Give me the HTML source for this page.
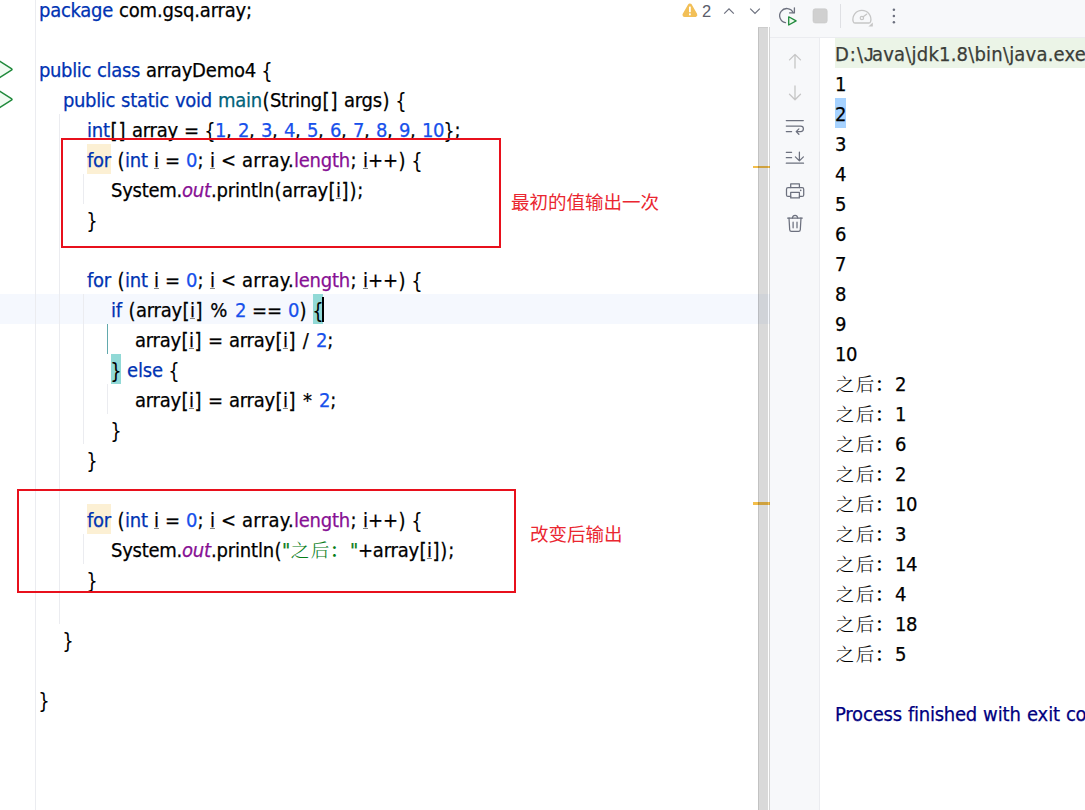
<!DOCTYPE html>
<html lang="zh-CN">
<head>
<meta charset="utf-8">
<title>arrayDemo4</title>
<style>
html,body{margin:0;padding:0;}
body{width:1085px;height:810px;overflow:hidden;position:relative;background:#fff;
 font-family:"DejaVu Sans Condensed","DejaVu Sans","Liberation Sans","Noto Sans CJK SC",sans-serif;font-stretch:condensed;font-size:20px;color:#000;}
#editor{position:absolute;left:0;top:0;width:770px;height:810px;background:#fff;overflow:hidden;}
#curline{position:absolute;left:0;top:294px;width:770px;height:30px;background:#f5f8fe;}
.gline{position:absolute;width:1px;background:#ebecf0;}
.ln{position:absolute;white-space:pre;height:30px;line-height:30px;color:#000;-webkit-text-stroke:0.25px;}
.k{color:#0033b3}.n{color:#1750eb}.f{color:#871094}.m{color:#00627a}.s{color:#067d17}
.i{color:#871094;font-style:italic}
.u{text-decoration:underline;text-decoration-color:#808080;text-decoration-thickness:1px;text-underline-offset:1px}
.z{color:#067d17;font-family:"Liberation Serif","Noto Serif CJK SC",serif;font-weight:300;-webkit-text-stroke:0;position:relative;top:0px}
.w{letter-spacing:0.28px}
.hl{position:absolute;background:#fcf0d4;height:30px;}
.br{position:absolute;background:#91d9d6;height:30px;width:10px}
.caret{position:absolute;width:2px;height:25px;background:#000;}
.box{position:absolute;border:2px solid #e8101c;box-sizing:border-box;}
.note{position:absolute;color:#ea2630;font-family:"Liberation Sans","Noto Sans CJK SC",sans-serif;font-size:18.5px;white-space:pre;line-height:24px;}
#sb{position:absolute;left:758px;top:27px;width:10px;height:783px;background:rgba(0,0,0,0.15);border-left:1px solid rgba(0,0,0,0.1);border-top:1px solid rgba(0,0,0,0.05);box-sizing:border-box;}
#sb2{position:absolute;left:769px;top:27px;width:1px;height:783px;background:rgba(0,0,0,0.17);}
.mark{position:absolute;left:753px;width:17px;height:2px;background:#f3be4b;}
#panel{position:absolute;left:770px;top:0;width:315px;height:810px;background:#f7f8fa;}
#tbline{position:absolute;left:0;top:37px;width:315px;height:1px;background:#ebecf0;}
#console{position:absolute;left:49px;top:38px;width:266px;height:772px;background:#fff;border-left:1px solid #ebecf0;box-sizing:border-box;overflow:hidden;}
.cl{position:absolute;left:15px;-webkit-text-stroke:0.25px;white-space:pre;height:30px;line-height:30px;color:#000;}
.cmd{color:#3a3d38}
.b{display:inline-block;transform:scaleY(1.09);transform-origin:50% 16.2px}
.b2{-webkit-text-stroke:0}
.J{font-family:"Liberation Sans",sans-serif;font-size:19px}
.cmdbg{position:absolute;left:15px;top:0;width:260px;height:30px;background:#ebf4e7}
.selbg{position:absolute;left:15px;top:60px;width:11px;height:30px;background:#a6d2ff}
.zc{font-family:"Liberation Serif","Noto Serif CJK SC",serif;font-weight:300;-webkit-text-stroke:0;color:#000;position:relative;top:0px}
.fin{color:#00007f}
.z,.zc{font-size:18.5px}
.zb{font-weight:600}
svg{position:absolute;overflow:visible}
</style>
</head>
<body>
<div id="editor">
<div id="curline"></div>
<div class="gline" style="left:35px;top:0;height:810px"></div>
<div class="gline" style="left:59px;top:114px;height:510px"></div>
<div class="gline" style="left:83px;top:174px;height:30px"></div>
<div class="gline" style="left:83px;top:294px;height:150px"></div>
<div class="gline" style="left:83px;top:534px;height:30px"></div>
<div class="gline" style="left:107px;top:324px;height:30px;background:#62a9ad"></div>
<div class="gline" style="left:107px;top:384px;height:30px"></div>
<div class="hl" style="left:87px;top:144px;width:24px"></div>
<div class="hl" style="left:87px;top:504px;width:24px"></div>
<div class="br" style="left:313px;top:294px"></div>
<div class="br" style="left:111px;top:354px"></div>
<div class="ln" id="L1" style="top:-5px;left:39px"><span class="k"><span style="letter-spacing:-0.277px">package</span></span><span class="p"><span class="w"> </span><span style="letter-spacing:-0.163px">com.gsq.array;</span></span></div>
<div class="ln" id="L3" style="top:55px;left:39px"><span class="k"><span style="letter-spacing:-0.359px">public</span><span class="w"> </span><span style="letter-spacing:-0.334px">class</span></span><span class="p"><span class="w"> </span><span style="letter-spacing:-0.205px">arrayDemo4</span><span class="w"> </span><span class="b b2" style="margin-left:-0.727px;margin-right:-0.727px">{</span></span></div>
<div class="ln" id="L4" style="top:85px;left:63px"><span class="k"><span style="letter-spacing:-0.359px">public</span><span class="w"> </span><span style="letter-spacing:-0.234px">static</span><span class="w"> </span><span style="letter-spacing:-0.270px">void</span></span><span class="p"><span class="w"> </span></span><span class="m"><span style="letter-spacing:-0.242px">main</span></span><span class="p"><span class="b" style="margin-left:0.484px;margin-right:0.484px">(</span><span style="letter-spacing:-0.284px">String</span><span class="b" style="margin-left:0.484px;margin-right:0.484px">[</span><span class="b" style="margin-left:0.484px;margin-right:0.484px">]</span><span class="w"> </span><span style="letter-spacing:-0.219px">args</span><span class="b" style="margin-left:0.484px;margin-right:0.484px">)</span><span class="w"> </span><span class="b b2" style="margin-left:-0.727px;margin-right:-0.727px">{</span></span></div>
<div class="ln" id="L5" style="top:115px;left:87px"><span class="k"><span style="letter-spacing:-0.156px">int</span></span><span class="p"><span class="b" style="margin-left:0.484px;margin-right:0.484px">[</span><span class="b" style="margin-left:0.484px;margin-right:0.484px">]</span><span class="w"> </span><span style="letter-spacing:-0.228px">array</span><span class="w"> </span><span style="letter-spacing:-0.078px">=</span><span class="w"> </span><span class="b b2" style="margin-left:-0.727px;margin-right:-0.727px">{</span></span><span class="n"><span style="letter-spacing:-0.453px">1</span></span><span class="p"><span style="letter-spacing:0.281px">,</span><span class="w"> </span></span><span class="n"><span style="letter-spacing:-0.453px">2</span></span><span class="p"><span style="letter-spacing:0.281px">,</span><span class="w"> </span></span><span class="n"><span style="letter-spacing:-0.453px">3</span></span><span class="p"><span style="letter-spacing:0.281px">,</span><span class="w"> </span></span><span class="n"><span style="letter-spacing:-0.453px">4</span></span><span class="p"><span style="letter-spacing:0.281px">,</span><span class="w"> </span></span><span class="n"><span style="letter-spacing:-0.453px">5</span></span><span class="p"><span style="letter-spacing:0.281px">,</span><span class="w"> </span></span><span class="n"><span style="letter-spacing:-0.453px">6</span></span><span class="p"><span style="letter-spacing:0.281px">,</span><span class="w"> </span></span><span class="n"><span style="letter-spacing:-0.453px">7</span></span><span class="p"><span style="letter-spacing:0.281px">,</span><span class="w"> </span></span><span class="n"><span style="letter-spacing:-0.453px">8</span></span><span class="p"><span style="letter-spacing:0.281px">,</span><span class="w"> </span></span><span class="n"><span style="letter-spacing:-0.453px">9</span></span><span class="p"><span style="letter-spacing:0.281px">,</span><span class="w"> </span></span><span class="n"><span style="letter-spacing:-0.445px">10</span></span><span class="p"><span class="b b2" style="margin-left:-0.727px;margin-right:-0.727px">}</span><span style="margin-left:0.461px;letter-spacing:0.461px">;</span></span></div>
<div class="ln" id="L6" style="top:145px;left:87px"><span class="k"><span style="letter-spacing:-0.245px">for</span></span><span class="p"><span class="w"> </span><span class="b" style="margin-left:0.484px;margin-right:0.484px">(</span></span><span class="k"><span style="letter-spacing:-0.156px">int</span></span><span class="p"><span class="w"> </span></span><span class="u"><span style="letter-spacing:0.000px">i</span></span><span class="p"><span class="w"> </span><span style="letter-spacing:-0.078px">=</span><span class="w"> </span></span><span class="n"><span style="letter-spacing:-0.453px">0</span></span><span class="p"><span style="margin-left:0.461px;letter-spacing:0.461px">;</span><span class="w"> </span></span><span class="u"><span style="letter-spacing:0.000px">i</span></span><span class="p"><span class="w"> </span><span style="letter-spacing:-0.078px">&lt;</span><span class="w"> </span><span style="letter-spacing:0.333px">array.</span></span><span class="f"><span style="letter-spacing:-0.229px">length</span></span><span class="p"><span style="margin-left:0.461px;letter-spacing:0.461px">;</span><span class="w"> </span></span><span class="u"><span style="letter-spacing:0.000px">i</span></span><span class="p"><span style="letter-spacing:-0.078px">++</span><span class="b" style="margin-left:0.484px;margin-right:0.484px">)</span><span class="w"> </span><span class="b b2" style="margin-left:-0.727px;margin-right:-0.727px">{</span></span></div>
<div class="ln" id="L7" style="top:175px;left:111px"><span class="p"><span style="letter-spacing:-0.259px">System.</span></span><span class="i"><span style="letter-spacing:-0.156px">out</span></span><span class="p"><span style="letter-spacing:-0.176px">.println</span><span class="b" style="margin-left:0.484px;margin-right:0.484px">(</span><span style="letter-spacing:-0.228px">array</span><span class="b" style="margin-left:0.484px;margin-right:0.484px">[</span></span><span class="u"><span style="letter-spacing:0.000px">i</span></span><span class="p"><span class="b" style="margin-left:0.484px;margin-right:0.484px">]</span><span class="b" style="margin-left:0.484px;margin-right:0.484px">)</span><span style="margin-left:0.461px;letter-spacing:0.461px">;</span></span></div>
<div class="ln" id="L8" style="top:205px;left:87px"><span class="p"><span class="b b2" style="margin-left:-0.727px;margin-right:-0.727px">}</span></span></div>
<div class="ln" id="L10" style="top:265px;left:87px"><span class="k"><span style="letter-spacing:-0.245px">for</span></span><span class="p"><span class="w"> </span><span class="b" style="margin-left:0.484px;margin-right:0.484px">(</span></span><span class="k"><span style="letter-spacing:-0.156px">int</span></span><span class="p"><span class="w"> </span></span><span class="u"><span style="letter-spacing:0.000px">i</span></span><span class="p"><span class="w"> </span><span style="letter-spacing:-0.078px">=</span><span class="w"> </span></span><span class="n"><span style="letter-spacing:-0.453px">0</span></span><span class="p"><span style="margin-left:0.461px;letter-spacing:0.461px">;</span><span class="w"> </span></span><span class="u"><span style="letter-spacing:0.000px">i</span></span><span class="p"><span class="w"> </span><span style="letter-spacing:-0.078px">&lt;</span><span class="w"> </span><span style="letter-spacing:0.333px">array.</span></span><span class="f"><span style="letter-spacing:-0.229px">length</span></span><span class="p"><span style="margin-left:0.461px;letter-spacing:0.461px">;</span><span class="w"> </span></span><span class="u"><span style="letter-spacing:0.000px">i</span></span><span class="p"><span style="letter-spacing:-0.078px">++</span><span class="b" style="margin-left:0.484px;margin-right:0.484px">)</span><span class="w"> </span><span class="b b2" style="margin-left:-0.727px;margin-right:-0.727px">{</span></span></div>
<div class="ln" id="L11" style="top:295px;left:111px"><span class="k"><span style="letter-spacing:-0.164px">if</span></span><span class="p"><span class="w"> </span><span class="b" style="margin-left:0.484px;margin-right:0.484px">(</span><span style="letter-spacing:-0.228px">array</span><span class="b" style="margin-left:0.484px;margin-right:0.484px">[</span></span><span class="u"><span style="letter-spacing:0.000px">i</span></span><span class="p"><span class="b" style="margin-left:0.484px;margin-right:0.484px">]</span><span class="w"> </span><span style="margin-left:1.445px;letter-spacing:1.445px">%</span><span class="w"> </span></span><span class="n"><span style="letter-spacing:-0.453px">2</span></span><span class="p"><span class="w"> </span><span style="letter-spacing:-0.078px">==</span><span class="w"> </span></span><span class="n"><span style="letter-spacing:-0.453px">0</span></span><span class="p"><span class="b" style="margin-left:0.484px;margin-right:0.484px">)</span><span class="w"> </span></span><span class="p"><span class="b b2" style="margin-left:-0.727px;margin-right:-0.727px">{</span></span></div>
<div class="ln" id="L12" style="top:325px;left:135px"><span class="p"><span style="letter-spacing:-0.228px">array</span><span class="b" style="margin-left:0.484px;margin-right:0.484px">[</span></span><span class="u"><span style="letter-spacing:0.000px">i</span></span><span class="p"><span class="b" style="margin-left:0.484px;margin-right:0.484px">]</span><span class="w"> </span><span style="letter-spacing:-0.078px">=</span><span class="w"> </span><span style="letter-spacing:-0.228px">array</span><span class="b" style="margin-left:0.484px;margin-right:0.484px">[</span></span><span class="u"><span style="letter-spacing:0.000px">i</span></span><span class="p"><span class="b" style="margin-left:0.484px;margin-right:0.484px">]</span><span class="w"> </span><span style="margin-left:0.961px;letter-spacing:0.961px">/</span><span class="w"> </span></span><span class="n"><span style="letter-spacing:-0.453px">2</span></span><span class="p"><span style="margin-left:0.461px;letter-spacing:0.461px">;</span></span></div>
<div class="ln" id="L13" style="top:355px;left:111px"><span class="p"><span class="b b2" style="margin-left:-0.727px;margin-right:-0.727px">}</span></span><span class="p"><span class="w"> </span></span><span class="k"><span style="letter-spacing:-0.133px">else</span></span><span class="p"><span class="w"> </span><span class="b b2" style="margin-left:-0.727px;margin-right:-0.727px">{</span></span></div>
<div class="ln" id="L14" style="top:385px;left:135px"><span class="p"><span style="letter-spacing:-0.228px">array</span><span class="b" style="margin-left:0.484px;margin-right:0.484px">[</span></span><span class="u"><span style="letter-spacing:0.000px">i</span></span><span class="p"><span class="b" style="margin-left:0.484px;margin-right:0.484px">]</span><span class="w"> </span><span style="letter-spacing:-0.078px">=</span><span class="w"> </span><span style="letter-spacing:-0.228px">array</span><span class="b" style="margin-left:0.484px;margin-right:0.484px">[</span></span><span class="u"><span style="letter-spacing:0.000px">i</span></span><span class="p"><span class="b" style="margin-left:0.484px;margin-right:0.484px">]</span><span class="w"> </span><span style="margin-left:1.000px;letter-spacing:1.000px">*</span><span class="w"> </span></span><span class="n"><span style="letter-spacing:-0.453px">2</span></span><span class="p"><span style="margin-left:0.461px;letter-spacing:0.461px">;</span></span></div>
<div class="ln" id="L15" style="top:415px;left:111px"><span class="p"><span class="b b2" style="margin-left:-0.727px;margin-right:-0.727px">}</span></span></div>
<div class="ln" id="L16" style="top:445px;left:87px"><span class="p"><span class="b b2" style="margin-left:-0.727px;margin-right:-0.727px">}</span></span></div>
<div class="ln" id="L18" style="top:505px;left:87px"><span class="k"><span style="letter-spacing:-0.245px">for</span></span><span class="p"><span class="w"> </span><span class="b" style="margin-left:0.484px;margin-right:0.484px">(</span></span><span class="k"><span style="letter-spacing:-0.156px">int</span></span><span class="p"><span class="w"> </span></span><span class="u"><span style="letter-spacing:0.000px">i</span></span><span class="p"><span class="w"> </span><span style="letter-spacing:-0.078px">=</span><span class="w"> </span></span><span class="n"><span style="letter-spacing:-0.453px">0</span></span><span class="p"><span style="margin-left:0.461px;letter-spacing:0.461px">;</span><span class="w"> </span></span><span class="u"><span style="letter-spacing:0.000px">i</span></span><span class="p"><span class="w"> </span><span style="letter-spacing:-0.078px">&lt;</span><span class="w"> </span><span style="letter-spacing:0.333px">array.</span></span><span class="f"><span style="letter-spacing:-0.229px">length</span></span><span class="p"><span style="margin-left:0.461px;letter-spacing:0.461px">;</span><span class="w"> </span></span><span class="u"><span style="letter-spacing:0.000px">i</span></span><span class="p"><span style="letter-spacing:-0.078px">++</span><span class="b" style="margin-left:0.484px;margin-right:0.484px">)</span><span class="w"> </span><span class="b b2" style="margin-left:-0.727px;margin-right:-0.727px">{</span></span></div>
<div class="ln" id="L19" style="top:535px;left:111px"><span class="p"><span style="letter-spacing:-0.259px">System.</span></span><span class="i"><span style="letter-spacing:-0.156px">out</span></span><span class="p"><span style="letter-spacing:-0.176px">.println</span><span class="b" style="margin-left:0.484px;margin-right:0.484px">(</span></span><span class="s"><span style="letter-spacing:-0.281px">&quot;</span></span><span class="z"><span class="zr" style="margin-left:0.746px;margin-right:-0.746px;letter-spacing:1.492px">之后</span><span class="zb" style="margin-left:-0.258px;margin-right:0.258px;letter-spacing:1.484px">：</span></span><span class="s"><span style="letter-spacing:-0.281px">&quot;</span></span><span class="p"><span style="letter-spacing:-0.203px">+array</span><span class="b" style="margin-left:0.484px;margin-right:0.484px">[</span></span><span class="u"><span style="letter-spacing:0.000px">i</span></span><span class="p"><span class="b" style="margin-left:0.484px;margin-right:0.484px">]</span><span class="b" style="margin-left:0.484px;margin-right:0.484px">)</span><span style="margin-left:0.461px;letter-spacing:0.461px">;</span></span></div>
<div class="ln" id="L20" style="top:565px;left:87px"><span class="p"><span class="b b2" style="margin-left:-0.727px;margin-right:-0.727px">}</span></span></div>
<div class="ln" id="L22" style="top:625px;left:63px"><span class="p"><span class="b b2" style="margin-left:-0.727px;margin-right:-0.727px">}</span></span></div>
<div class="ln" id="L24" style="top:685px;left:39px"><span class="p"><span class="b b2" style="margin-left:-0.727px;margin-right:-0.727px">}</span></span></div>
<div class="caret" style="left:322px;top:297px"></div>

<svg id="gut" width="36" height="120" style="left:0;top:0" viewBox="0 0 36 120">
<path d="M-3 59.6 L11.4 68.6 Q12.7 69.4 11.4 70.2 L-3 79.2 Z" fill="#f1fbf2" stroke="#208a3c" stroke-width="1.5" stroke-linejoin="round"/>
<path d="M-3 89.6 L11.4 98.6 Q12.7 99.4 11.4 100.2 L-3 109.2 Z" fill="#f1fbf2" stroke="#208a3c" stroke-width="1.5" stroke-linejoin="round"/>
</svg>
<svg id="insp" width="90" height="24" style="left:675px;top:0" viewBox="675 0 90 24">
<path d="M689.9 5.6 L695.2 14.9 L684.6 14.9 Z" fill="#f2bf57" stroke="#f2bf57" stroke-width="4.2" stroke-linejoin="round"/>
<rect x="689" y="6.6" width="1.8" height="5.6" fill="#fff"/><rect x="689" y="13.4" width="1.8" height="1.9" fill="#fff"/>
<text x="702" y="17.2" font-family="Liberation Sans, sans-serif" font-size="16.5" fill="#5a5d6b">2</text>
<path d="M724.2 13.6 L729 8.8 L733.8 13.6" fill="none" stroke="#6c707e" stroke-width="1.2"/>
<path d="M750.2 8.6 L755 13.4 L759.8 8.6" fill="none" stroke="#6c707e" stroke-width="1.2"/>
</svg>
<div class="box" style="left:61px;top:138px;width:440px;height:110px"></div>
<div class="box" style="left:17px;top:489px;width:499px;height:104px"></div>
<div class="note" style="left:511px;top:191px">最初的值输出一次</div>
<div class="note" style="left:530px;top:523px">改变后输出</div>
</div>
<div class="mark" style="top:166px"></div>
<div class="mark" style="top:502px;height:2.5px"></div>
<div id="sb"></div><div id="sb2"></div>
<div id="panel">

<svg id="tb" width="140" height="37" style="left:0;top:0" viewBox="770 0 140 37">
<path d="M785.5 22.6 A7.1 7.1 0 1 1 793.2 12.6" fill="none" stroke="#6c707e" stroke-width="1.3" stroke-linecap="round"/>
<path d="M794.4 7.8 L794.4 12.9 L789.6 12.9" fill="none" stroke="#6c707e" stroke-width="1.3" stroke-linecap="round" stroke-linejoin="round"/>
<path d="M788.7 16.8 L796.1 20.9 L788.7 25 Z" fill="#eef9ef" stroke="#208a3c" stroke-width="1.3" stroke-linejoin="round"/>
<rect x="813" y="8.8" width="14.2" height="14.2" rx="2.2" fill="#d0d0d0" stroke="#c8c8c8" stroke-width="0.6"/>
<rect x="840" y="4" width="1" height="24" fill="#dfe0e4"/>
<path d="M853.2 21.6 A9 9 0 1 1 870.6 21.6 Q870.2 23 868.8 23 L855 23 Q853.6 23 853.2 21.6 Z" fill="none" stroke="#c6c6c6" stroke-width="1.3"/>
<circle cx="861.9" cy="18" r="1.7" fill="none" stroke="#c6c6c6" stroke-width="1.2"/>
<path d="M863.2 16.8 L866.6 14.2" stroke="#c6c6c6" stroke-width="1.3" stroke-linecap="round"/>
<path d="M872.8 22.4 L872.8 26.6 L868.4 26.6 Z" fill="#c6c6c6"/>
<circle cx="893.9" cy="9.7" r="1.25" fill="#6c707e"/><circle cx="893.9" cy="16" r="1.25" fill="#6c707e"/><circle cx="893.9" cy="22.3" r="1.25" fill="#6c707e"/>
</svg>
<svg id="lt" width="50" height="200" style="left:0;top:40px" viewBox="770 40 50 200" fill="none" stroke-linecap="round" stroke-linejoin="round">
<g stroke="#c6c6c6" stroke-width="1.3">
<path d="M795 68 L795 54.4 M789.5 59.9 L795 54.4 L800.5 59.9"/>
<path d="M795 86 L795 99.7 M789.5 94.2 L795 99.7 L800.5 94.2"/>
</g>
<g stroke="#6c707e" stroke-width="1.25">
<path d="M786.3 120.5 L803.3 120.5"/>
<path d="M786.3 126 L800.6 126 A2.8 2.8 0 0 1 800.6 131.6 L796.4 131.6 M798.9 128.9 L796.2 131.6 L798.9 134.3"/>
<path d="M786.3 131.6 L791.6 131.6"/>
<path d="M786.3 152.3 L791.6 152.3 M786.3 157.7 L791.6 157.7 M786.3 163.2 L803.5 163.2"/>
<path d="M799.4 152 L799.4 160.8 M795.4 156.9 L799.4 160.9 L803.4 156.9"/>
<path d="M790.7 187.5 L790.7 183.9 L799.4 183.9 L799.4 187.5"/>
<path d="M790.7 196.4 L788 196.4 Q786.5 196.4 786.5 194.9 L786.5 189.2 Q786.5 187.6 788 187.6 L802.2 187.6 Q803.7 187.6 803.7 189.2 L803.7 194.9 Q803.7 196.4 802.2 196.4 L799.4 196.4"/>
<rect x="790.7" y="192.4" width="8.7" height="5.5"/>
<path d="M787.6 218 L802.3 218"/>
<path d="M792.4 218 A2.7 3.2 0 0 1 797.7 218"/>
<path d="M789 218 L789.7 229.8 Q789.8 231.4 791.4 231.4 L798.6 231.4 Q800.2 231.4 800.3 229.8 L801 218"/>
<path d="M793.1 222.2 L793.1 227.8 M797 222.2 L797 227.8"/>
</g>
<circle cx="800.7" cy="190.4" r="0.8" fill="#6c707e"/>
</svg>
<div id="tbline"></div>
<div id="console">
<div class="cmdbg"></div><div class="selbg"></div>
<div class="cl" style="top:1px"><span class="cmd"><span class="p"><span style="letter-spacing:1.000px">D:\</span><span class="J" style="letter-spacing:-1.500px">J</span><span style="letter-spacing:0.200px">ava\jdk1.8\bin\java.exe</span><span class="w"> </span><span style="letter-spacing:0.286px">...</span></span></span></div>
<div class="cl" style="top:31px"><span class="p"><span style="letter-spacing:-0.453px">1</span></span></div>
<div class="cl" style="top:61px"><span class="sel"><span class="p"><span style="letter-spacing:-0.453px">2</span></span></span></div>
<div class="cl" style="top:91px"><span class="p"><span style="letter-spacing:-0.453px">3</span></span></div>
<div class="cl" style="top:121px"><span class="p"><span style="letter-spacing:-0.453px">4</span></span></div>
<div class="cl" style="top:151px"><span class="p"><span style="letter-spacing:-0.453px">5</span></span></div>
<div class="cl" style="top:181px"><span class="p"><span style="letter-spacing:-0.453px">6</span></span></div>
<div class="cl" style="top:211px"><span class="p"><span style="letter-spacing:-0.453px">7</span></span></div>
<div class="cl" style="top:241px"><span class="p"><span style="letter-spacing:-0.453px">8</span></span></div>
<div class="cl" style="top:271px"><span class="p"><span style="letter-spacing:-0.453px">9</span></span></div>
<div class="cl" style="top:301px"><span class="p"><span style="letter-spacing:-0.445px">10</span></span></div>
<div class="cl" style="top:331px"><span class="zc"><span class="zr" style="margin-left:0.746px;margin-right:-0.746px;letter-spacing:1.492px">之后</span><span class="zb" style="margin-left:-0.258px;margin-right:0.258px;letter-spacing:1.484px">：</span></span><span class="p"><span style="letter-spacing:-0.453px">2</span></span></div>
<div class="cl" style="top:361px"><span class="zc"><span class="zr" style="margin-left:0.746px;margin-right:-0.746px;letter-spacing:1.492px">之后</span><span class="zb" style="margin-left:-0.258px;margin-right:0.258px;letter-spacing:1.484px">：</span></span><span class="p"><span style="letter-spacing:-0.453px">1</span></span></div>
<div class="cl" style="top:391px"><span class="zc"><span class="zr" style="margin-left:0.746px;margin-right:-0.746px;letter-spacing:1.492px">之后</span><span class="zb" style="margin-left:-0.258px;margin-right:0.258px;letter-spacing:1.484px">：</span></span><span class="p"><span style="letter-spacing:-0.453px">6</span></span></div>
<div class="cl" style="top:421px"><span class="zc"><span class="zr" style="margin-left:0.746px;margin-right:-0.746px;letter-spacing:1.492px">之后</span><span class="zb" style="margin-left:-0.258px;margin-right:0.258px;letter-spacing:1.484px">：</span></span><span class="p"><span style="letter-spacing:-0.453px">2</span></span></div>
<div class="cl" style="top:451px"><span class="zc"><span class="zr" style="margin-left:0.746px;margin-right:-0.746px;letter-spacing:1.492px">之后</span><span class="zb" style="margin-left:-0.258px;margin-right:0.258px;letter-spacing:1.484px">：</span></span><span class="p"><span style="letter-spacing:-0.445px">10</span></span></div>
<div class="cl" style="top:481px"><span class="zc"><span class="zr" style="margin-left:0.746px;margin-right:-0.746px;letter-spacing:1.492px">之后</span><span class="zb" style="margin-left:-0.258px;margin-right:0.258px;letter-spacing:1.484px">：</span></span><span class="p"><span style="letter-spacing:-0.453px">3</span></span></div>
<div class="cl" style="top:511px"><span class="zc"><span class="zr" style="margin-left:0.746px;margin-right:-0.746px;letter-spacing:1.492px">之后</span><span class="zb" style="margin-left:-0.258px;margin-right:0.258px;letter-spacing:1.484px">：</span></span><span class="p"><span style="letter-spacing:-0.445px">14</span></span></div>
<div class="cl" style="top:541px"><span class="zc"><span class="zr" style="margin-left:0.746px;margin-right:-0.746px;letter-spacing:1.492px">之后</span><span class="zb" style="margin-left:-0.258px;margin-right:0.258px;letter-spacing:1.484px">：</span></span><span class="p"><span style="letter-spacing:-0.453px">4</span></span></div>
<div class="cl" style="top:571px"><span class="zc"><span class="zr" style="margin-left:0.746px;margin-right:-0.746px;letter-spacing:1.492px">之后</span><span class="zb" style="margin-left:-0.258px;margin-right:0.258px;letter-spacing:1.484px">：</span></span><span class="p"><span style="letter-spacing:-0.445px">18</span></span></div>
<div class="cl" style="top:601px"><span class="zc"><span class="zr" style="margin-left:0.746px;margin-right:-0.746px;letter-spacing:1.492px">之后</span><span class="zb" style="margin-left:-0.258px;margin-right:0.258px;letter-spacing:1.484px">：</span></span><span class="p"><span style="letter-spacing:-0.453px">5</span></span></div>
<div class="cl fin" style="top:661px"><span class="p"><span style="letter-spacing:-0.170px">Process</span><span class="w"> </span><span style="letter-spacing:-0.254px">finished</span><span class="w"> </span><span style="letter-spacing:-0.047px">with</span><span class="w"> </span><span style="letter-spacing:-0.105px">exit</span><span class="w"> </span><span style="letter-spacing:-0.352px">code</span><span class="w"> </span><span style="letter-spacing:-0.453px">0</span></span></div>
</div>
</div>
</body>
</html>
